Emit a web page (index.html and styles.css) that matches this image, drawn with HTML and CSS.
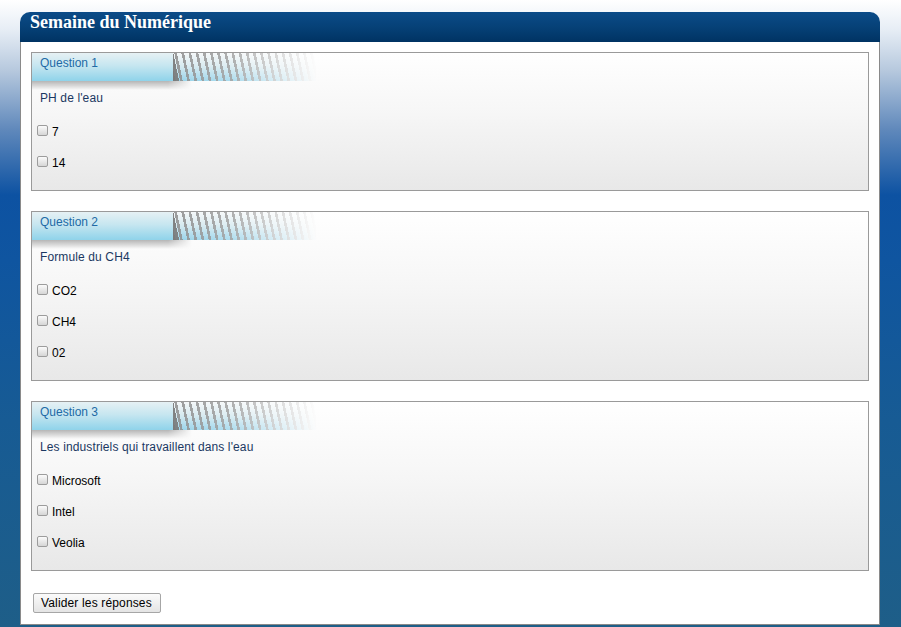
FILE: index.html
```html
<!DOCTYPE html>
<html lang="fr">
<head>
<meta charset="utf-8">
<title>Semaine du Numérique</title>
<link rel="stylesheet" href="styles.css">
</head>
<body>
<div class="page">
  <div class="panel">
    <div class="panel-header"><h1 class="title">Semaine du Numérique</h1></div>
    <form class="panel-body">
      <div class="question">
        <div class="banner"><div class="banner-label">Question 1</div><div class="banner-stripes"></div></div>
        <p class="question-text">PH de l'eau</p>
        <ul class="options">
          <li class="option"><input type="checkbox" class="check"><span>7</span></li>
          <li class="option"><input type="checkbox" class="check"><span>14</span></li>
        </ul>
      </div>
      <div class="question">
        <div class="banner"><div class="banner-label">Question 2</div><div class="banner-stripes"></div></div>
        <p class="question-text">Formule du CH4</p>
        <ul class="options">
          <li class="option"><input type="checkbox" class="check"><span>CO2</span></li>
          <li class="option"><input type="checkbox" class="check"><span>CH4</span></li>
          <li class="option"><input type="checkbox" class="check"><span>02</span></li>
        </ul>
      </div>
      <div class="question">
        <div class="banner"><div class="banner-label">Question 3</div><div class="banner-stripes"></div></div>
        <p class="question-text">Les industriels qui travaillent dans l'eau</p>
        <ul class="options">
          <li class="option"><input type="checkbox" class="check"><span>Microsoft</span></li>
          <li class="option"><input type="checkbox" class="check"><span>Intel</span></li>
          <li class="option"><input type="checkbox" class="check"><span>Veolia</span></li>
        </ul>
      </div>
      <div class="actions"><button type="button" class="submit">Valider les réponses</button></div>
    </form>
  </div>
</div>
</body>
</html>
```

FILE: styles.css
```css
html, body {
  margin: 0;
  padding: 0;
  height: 100%;
}
body {
  font-family: "Liberation Sans", Arial, sans-serif;
  font-size: 12px;
  background: linear-gradient(to bottom,
    #ffffff 0px,
    #e6edf5 30px,
    #b7c9de 70px,
    #5f88bb 130px,
    #0d52a2 195px,
    #0f55a0 260px,
    #175b94 420px,
    #1e5e88 627px);
  overflow: hidden;
}
.page {
  padding: 12px 0 0 20px;
}
.panel {
  width: 860px;
  box-sizing: border-box;
  background: #ffffff;
  border-bottom: 1px solid #8a8a8a;
  border-radius: 10px 10px 0 0;
}
.panel-header {
  height: 30px;
  box-sizing: border-box;
  padding: 0 0 0 10px;
  border-radius: 10px 10px 0 0;
  background: linear-gradient(to bottom, #0b4b88 0%, #064177 50%, #003363 100%);
}
.title {
  margin: 0;
  font-family: "Liberation Serif", "Times New Roman", serif;
  font-weight: bold;
  font-size: 18px;
  line-height: 20px;
  color: #ffffff;
}
.panel-body {
  margin: 0;
  padding: 10px 10px 11px;
  border-left: 1px solid #8a8a8a;
  border-right: 1px solid #8a8a8a;
  display: flex;
  flex-direction: column;
  gap: 20px;
}
.question {
  border: 1px solid #9a9a9a;
  background: linear-gradient(to bottom, #ffffff 0%, #f6f6f6 45%, #e8e8e8 100%);
  padding-bottom: 12px;
}
.banner {
  position: relative;
  display: flex;
  width: 285px;
  height: 28px;
}
.banner::after {
  content: "";
  position: absolute;
  left: 0;
  top: 28px;
  width: 160px;
  height: 9px;
  background: linear-gradient(to bottom, rgba(0,0,0,0.28), rgba(0,0,0,0));
  -webkit-mask-image: linear-gradient(to right, #000 85%, transparent 100%);
  mask-image: linear-gradient(to right, #000 85%, transparent 100%);
}
.banner-label {
  width: 146px;
  box-sizing: border-box;
  padding: 3px 0 0 8px;
  line-height: 14px;
  color: #216aa6;
  background: linear-gradient(to bottom, #e6f1f4 0%, #c6e6f0 45%, #8fd3ea 100%);
  clip-path: polygon(0 0, 141px 0, 146px 28px, 0 28px);
}
.banner-stripes {
  flex: 1;
  margin-left: -5px;
  background:
    linear-gradient(78deg, rgba(120,120,120,0.9) 0px, rgba(120,120,120,0.9) 6px, rgba(120,120,120,0) 6px),
    repeating-linear-gradient(78deg,
      rgba(140,140,140,0.85) 0px, rgba(140,140,140,0.85) 2.6px,
      rgba(140,140,140,0) 2.6px, rgba(140,140,140,0) 7px),
    linear-gradient(to bottom, #f4f7f8 0%, #d7eaf0 45%, #97d3ea 100%);
  -webkit-mask-image: linear-gradient(to right, #000 0%, rgba(0,0,0,0.8) 40%, rgba(0,0,0,0) 100%);
  mask-image: linear-gradient(to right, #000 0%, rgba(0,0,0,0.8) 40%, rgba(0,0,0,0) 100%);
}
.question-text {
  margin: 10px 0 11px 8px;
  line-height: 14px;
  letter-spacing: 0.12px;
  color: #1b3862;
}
.options {
  list-style: none;
  margin: 0;
  padding: 0;
}
.option {
  height: 31px;
  display: flex;
  align-items: center;
  padding-left: 5px;
  color: #000;
}
.check {
  -webkit-appearance: none;
  appearance: none;
  width: 11px;
  height: 11px;
  margin: -3px 4px 0 0;
  box-sizing: border-box;
  border: 1px solid #9c9c9c;
  border-radius: 2px;
  background: linear-gradient(to bottom, #fbfbfb 0%, #d6d6d6 100%);
}
.actions {
  padding: 2px 0 0 2px;
}
.submit {
  font-family: "Liberation Sans", Arial, sans-serif;
  font-size: 12px;
  letter-spacing: 0.15px;
  height: 20px;
  padding: 0 8px 0 7px;
  margin: 0;
  color: #000;
  border: 1px solid #a6a6a6;
  border-radius: 2px;
  background: linear-gradient(to bottom, #fbfbfb 0%, #e4e4e4 100%);
}
```
